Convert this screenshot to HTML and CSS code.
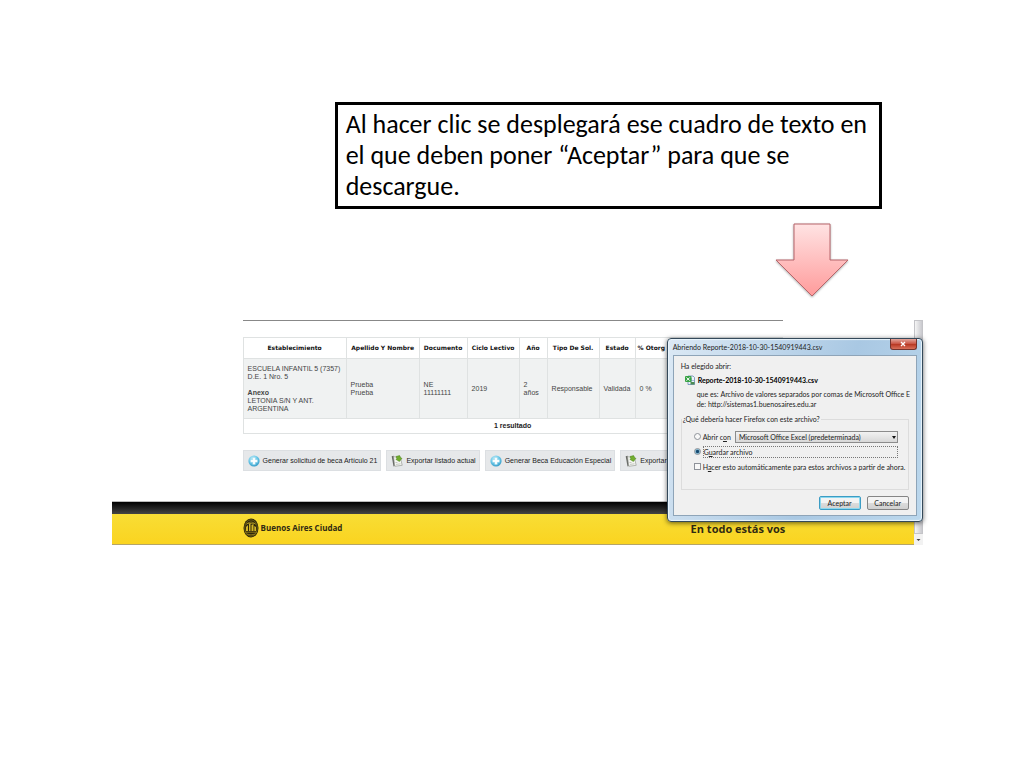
FILE: index.html
```html
<!DOCTYPE html>
<html lang="es">
<head>
<meta charset="utf-8">
<title>Descarga del reporte</title>
<link rel="stylesheet" href="styles.css">
</head>
<body>
<svg class="defs" width="0" height="0" aria-hidden="true">
  <defs>
    <radialGradient id="ball" cx="0.4" cy="0.3" r="0.7"><stop offset="0" stop-color="#c5edf8"/><stop offset="0.55" stop-color="#6cc8e8"/><stop offset="1" stop-color="#3b9fca"/></radialGradient>
    <symbol id="add" viewBox="0 0 12 12"><circle cx="6" cy="6" r="5.6" fill="url(#ball)"/><path d="M4.7 2.5h2.6v2.2h2.2v2.6H7.300v2.200H4.700V7.300H2.500V4.700h2.200z" fill="#fff" stroke="#8fd3eb" stroke-width=".4"/></symbol>
    <symbol id="export" viewBox="0 0 12 12"><path d="M.7 1.200 2.700.8 4 10.800l-1.500.6z" fill="#686a66"/><path d="M2.500 1.600 9.500 3l1.700 7.300-7.400 1z" fill="#f5f6f2" stroke="#8b8e88" stroke-width=".6"/><path d="M4.500 7.500h2M5 9.400l4.500-.6" stroke="#a4a7a1" stroke-width=".6"/><path d="M5 1.500 8.600.6 10 3.200l1 .1-2.600 3.200L4.800 4.300l1.200-.4z" fill="#72ae2e" stroke="#477f18" stroke-width=".5"/></symbol>
  </defs>
</svg>
<main class="slide">
  <p class="callout">Al hacer clic se desplegará ese cuadro de texto en el que deben poner “Aceptar” para que se descargue.</p>
  <svg class="arrow" viewBox="0 0 76 78" aria-hidden="true">
    <defs><linearGradient id="pink" x2="0" y2="1"><stop stop-color="#ffe3e3"/><stop offset="1" stop-color="#ff9b9b"/></linearGradient></defs>
    <path d="M20 2h36v36h18L38 74 2 38h18z" fill="url(#pink)" stroke="#b8656a"/>
  </svg>
  <section class="capture">
    <div class="content">
      <div class="page">
        <hr class="rule">
        <table class="results">
          <colgroup><col class="c-school"><col class="c-name"><col class="c-doc"><col class="c-cycle"><col class="c-year"><col class="c-type"><col class="c-state"><col></colgroup>
          <thead><tr><th>Establecimiento</th><th>Apellido Y Nombre</th><th>Documento</th><th>Ciclo Lectivo</th><th>Año</th><th>Tipo De Sol.</th><th>Estado</th><th class="last">% Otorg</th></tr></thead>
          <tbody><tr><td>ESCUELA INFANTIL 5 (7357)<br>D.E. 1 Nro. 5<br><br><b>Anexo</b><br>LETONIA S/N Y ANT.<br>ARGENTINA</td><td>Prueba<br>Prueba</td><td>NE<br>11111111</td><td>2019</td><td>2<br>años</td><td>Responsable</td><td>Validada</td><td>0 %</td></tr></tbody>
          <tfoot><tr><td colspan="8">1 resultado</td></tr></tfoot>
        </table>
        <div class="actions">
          <button class="action" type="button"><svg><use href="#add"/></svg>Generar solicitud de beca Artículo 21</button>
          <button class="action" type="button"><svg><use href="#export"/></svg>Exportar listado actual</button>
          <button class="action" type="button"><svg><use href="#add"/></svg>Generar Beca Educación Especial</button>
          <button class="action" type="button"><svg><use href="#export"/></svg>Exportar l</button>
        </div>
      </div>
      <footer class="footer">
        <div class="brand">
          <svg class="crest" viewBox="0 0 16 20" aria-hidden="true"><ellipse cx="8" cy="10" rx="7.500" ry="9.500" fill="#2e270c"/><ellipse cx="8" cy="10" rx="6.300" ry="8.200" fill="none" stroke="#a58e1c" stroke-width=".5"/><path d="M3 6.500q5-5 10 0M4 5.500h8" fill="none" stroke="#c5ab25" stroke-width=".6"/><path d="M3 13V9l2-2v6zM6 13V6l1.500-1v8zM8.500 13V7l2-1v7zM11.300 13V8l1.700 1v4z" fill="#d3b626"/><path d="M2 14.200h12M3.500 16q4.500 1.800 9 0" fill="none" stroke="#a38c1d" stroke-width=".8"/></svg>
          Buenos Aires Ciudad
        </div>
        <div class="motto">En todo estás vos</div>
      </footer>
    </div>
    <div class="scroll"><span class="thumb"></span><svg viewBox="0 0 9 11" aria-hidden="true"><path d="M2.500 5h4l-2 2z" fill="#444"/></svg></div>
    <form class="dialog" role="dialog" aria-label="Abriendo Reporte">
      <header class="titlebar"><span>Abriendo Reporte-2018-10-30-1540919443.csv</span><button class="close" type="button" aria-label="Cerrar"><svg viewBox="0 0 8 6"><path d="m2 1 4 4m0-4L2 5" stroke="#fff" stroke-width="1.300"/></svg></button></header>
      <div class="panel">
        <div>Ha elegido abrir:</div>
        <div class="file"><svg viewBox="0 0 10 10" aria-hidden="true"><path d="M3 1h5l1.500 1.500V9.500H3z" fill="#edf3fb" stroke="#587bab" stroke-width=".7"/><path d="M6.500 3v5M4 5.500h5" stroke="#7897bf" stroke-width=".6"/><rect y="1" width="6.500" height="6" rx="1" fill="#38a345"/><path d="m1.500 2.400 3.300 3.300m0-3.300L1.500 5.700" stroke="#fff"/><path d="M5.500 7h4v2.500h-4z" fill="#4d8b53"/></svg><b>Reporte-2018-10-30-1540919443.csv</b></div>
        <div class="detail"><span>que es:</span><span>Archivo de valores separados por comas de Microsoft Office E</span></div>
        <div class="detail"><span>de:</span><span>http://sistemas1.buenosaires.edu.ar</span></div>
        <fieldset class="options">
          <legend>¿Qué debería hacer Firefox con este archivo?</legend>
          <div class="option"><input type="radio" name="do" id="open"><label for="open">Abrir c<u>o</u>n</label><select class="program" aria-label="Programa"><option>Microsoft Office Excel (predeterminada)</option></select></div>
          <div class="option"><input type="radio" name="do" id="save" checked><label class="focus" for="save">G<u>u</u>ardar archivo</label></div>
          <div class="option"><input type="checkbox" id="always"><label for="always">H<u>a</u>cer esto automáticamente para estos archivos a partir de ahora.</label></div>
        </fieldset>
        <div class="buttons"><button class="btn primary" type="button">Aceptar</button><button class="btn" type="button">Cancelar</button></div>
      </div>
    </form>
  </section>
</main>
</body>
</html>
```
FILE: styles.css
```css
* { box-sizing: border-box; }
body { margin: 0; background: #fff; color: #000; }
button, input, select { font: inherit; color: inherit; margin: 0; }
.defs { position: absolute; }
.slide { display: flex; flex-direction: column; padding: 102px 9.900% 0 10.900%; }
.callout {
  margin: 0 5% 0 27.500%;
  padding: 4px 8px;
  border: 3px solid #000;
  font: 26px/31px Carlito, Calibri, Lato, sans-serif;
}
.arrow { align-self: flex-end; width: 76px; height: 78px; margin: 13px 73px 20px 0; filter: drop-shadow(0 1px 1px #aaa); }

.capture { position: relative; display: flex; font: 7px/8px "Liberation Sans", Arial, sans-serif; }
.content { flex: 1; min-width: 0; }
.page { width: 671px; height: 181px; padding-left: 131px; }
.rule { margin: 0 0 16px; border: 0; border-top: 1px solid #888; }
.results { width: 100%; border-collapse: collapse; table-layout: fixed; color: #444; }
.results th, .results td { border: 1px solid #dfe2e2; }
.results th { height: 21px; padding: 0; color: #111; font: bold 6px/8px "DejaVu Sans", Verdana, sans-serif; white-space: nowrap; }
.results .last { padding-left: 2px; text-align: left; }
.results td { height: 60px; padding: 0 4px; background: #f0f2f2; }
.results tfoot td { height: 15px; padding: 0; background: #fff; color: #222; font-weight: bold; text-align: center; }
.c-school { width: 103px; }
.c-name { width: 73px; }
.c-doc { width: 48px; }
.c-cycle, .c-type { width: 52px; }
.c-year { width: 28px; }
.c-state { width: 36px; }
.actions { display: flex; gap: 5px; padding-top: 16px; }
.action { flex: none; display: flex; align-items: center; gap: 3px; height: 21px; padding: 0 3px 0 4px; border: 1px solid #dcdfe2; background: #e6e8ea; color: #222; white-space: nowrap; }
.action svg { width: 12px; height: 12px; }

.footer {
  display: flex; align-items: center; height: 44px; padding: 9px 0 0 131px;
  border-top: 1px solid #bbb; border-bottom: 1px solid #b5a568;
  background: linear-gradient(#000, #444 12px, #f8dd35 12px, #fad420);
  color: #302a12; font-family: "Open Sans", "Noto Sans", sans-serif; font-weight: 700;
}
.brand { display: flex; align-items: center; gap: 2px; width: 448px; font-size: 8px; }
.crest { width: 16px; height: 20px; }
.motto { padding-top: 2px; font-size: 11px; line-height: 12px; }
.scroll { display: flex; flex-direction: column; width: 9px; background: #f2f2f2; }
.thumb { flex: 1; border: 1px solid #c4c4c8; background: linear-gradient(90deg, #f5f5f5, #c9c9ce); }
.scroll svg { width: 9px; height: 11px; }

.dialog {
  position: absolute; top: 18px; right: 0; width: 256px; height: 184px; padding: 0 5px 5px;
  border: 1px solid #34495a; border-radius: 4px; background: linear-gradient(110deg, #dce9f5, #a9c8e3 60%, #bcd8ed);
  box-shadow: inset 0 0 1px 1px #eaf5fc, 0 1px 5px #0009;
  color: #222; font: 7px/10px Lato, "Segoe UI", sans-serif;
}
.titlebar { display: flex; justify-content: space-between; height: 16px; line-height: 16px; }
.close { display: grid; place-items: center; width: 27px; height: 11px; padding: 0; border: 1px solid #74332c; border-top: 0; border-radius: 0 0 3px 3px; background: linear-gradient(#e3a79d, #c8503f 50%, #b5341f 50%, #d9705a); }
.close svg { width: 8px; height: 6px; }
.panel { height: 161px; padding: 5px 7px; border: 1px solid #8ea4b8; background: #f0f0f0; }
.file { display: flex; align-items: center; gap: 3px; padding: 4px 0 4px 4px; color: #000; }
.file svg { width: 10px; height: 10px; }
.detail { display: flex; gap: 2px; padding-left: 16px; white-space: nowrap; }
.options { min-width: 0; height: 76px; margin: 5px 0 0; padding: 5px 10px 0 12px; border: 1px solid #dcdcdc; }
.options legend { margin-left: -12px; padding: 0 1px; }
.option { display: flex; align-items: center; gap: 2px; height: 15px; white-space: nowrap; }
.option input { flex: none; width: 7px; height: 7px; appearance: none; border: 1px solid #8e9299; background: #f8f8f8; }
.option input[type="radio"] { border-radius: 50%; }
.option input:checked { background: radial-gradient(#174a70 35%, #8fc4dc 60%); }
.program { flex: 1; height: 12px; margin-left: 2px; padding: 0 3px; border: 1px solid #8c8c8c; appearance: none; background: linear-gradient(#f2f2f2, #d8d8d8); }
.option:has(.program) { position: relative; }
.option:has(.program)::after { content: ""; position: absolute; right: 2px; top: 7px; border: 2px solid transparent; border-top: 3px solid #111; border-bottom: 0; }
.focus { flex: 1; border: 1px dotted #777; }
.buttons { display: flex; justify-content: flex-end; gap: 6px; padding-top: 6px; }
.btn { width: 42px; height: 14px; padding: 0; border: 1px solid #858585; border-radius: 2px; background: linear-gradient(#f3f3f3 50%, #dcdcdc 50%, #d0d0d0); }
.primary { border-color: #3c9cc4; box-shadow: inset 0 0 0 1px #8bd8ef; }
```
